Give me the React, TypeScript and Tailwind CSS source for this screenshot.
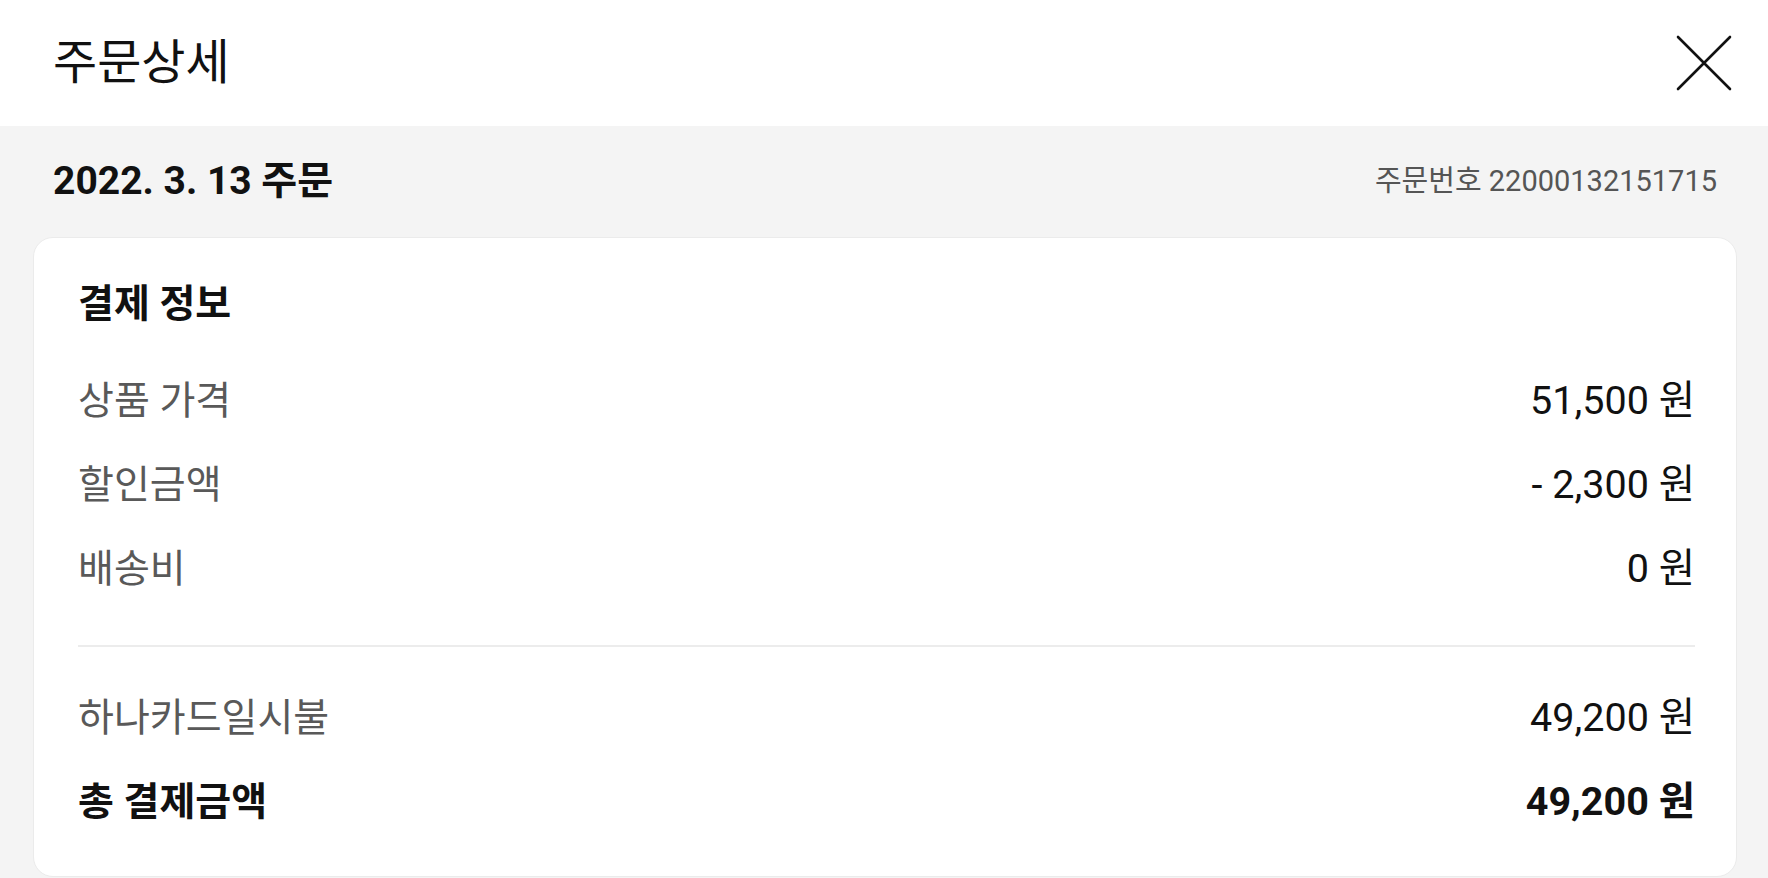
import React from "react";

const font = { fontFamily: '"Roboto", "Noto Sans CJK KR", sans-serif' };

function Row({ label, value, bold }: { label: string; value: string; bold?: boolean }) {
  return (
    <div className="flex h-[84px] items-center justify-between leading-none">
      <span className={bold ? "text-[39px] font-bold text-[#111]" : "text-[39px] text-[#595959]"}>{label}</span>
      <span className={bold ? "text-[39.5px] font-bold text-[#111]" : "text-[39.5px] text-[#111]"}>{value}</span>
    </div>
  );
}

export default function App() {
  return (
    <div className="flex h-[878px] w-full flex-col overflow-hidden bg-[#f4f4f4]" style={font}>
      <header className="flex h-[126px] shrink-0 items-center justify-between bg-white pl-[53px] pr-[36px]">
        <h1 className="text-[48px] font-normal leading-none text-[#111]">주문상세</h1>
        <svg width="56" height="56" viewBox="0 0 56 56" className="text-[#111]">
          <path d="M2 2 L54 54 M54 2 L2 54" stroke="currentColor" strokeWidth="2.6" strokeLinecap="round" />
        </svg>
      </header>
      <div className="flex h-[111px] shrink-0 items-center justify-between pl-[53px] pr-[51px]">
        <span className="text-[39px] font-bold leading-none text-[#111]">2022. 3. 13 주문</span>
        <span className="text-[29px] leading-none text-[#555]">주문번호 22000132151715</span>
      </div>
      <div className="ml-[33px] mr-[31px] mb-[1px] flex-1 rounded-[20px] border border-[#ebebeb] bg-white pl-[44px] pr-[41px] pt-[42px]">
        <div className="flex h-[48px] items-center text-[39px] font-bold leading-none text-[#111]">결제 정보</div>
        <div className="mt-[31px]">
          <Row label="상품 가격" value="51,500 원" />
          <Row label="할인금액" value="- 2,300 원" />
          <Row label="배송비" value="0 원" />
        </div>
        <div className="mt-[34px] h-[2px] bg-[#ececec]" />
        <div className="mt-[29px]">
          <Row label="하나카드일시불" value="49,200 원" />
          <Row label="총 결제금액" value="49,200 원" bold />
        </div>
      </div>
    </div>
  );
}
